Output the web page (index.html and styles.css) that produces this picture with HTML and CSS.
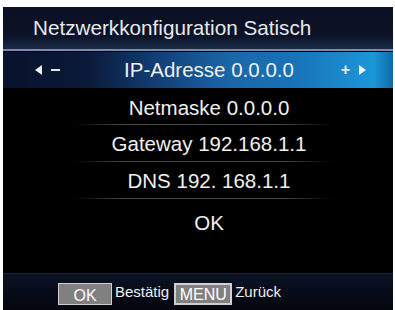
FILE: index.html
```html
<!DOCTYPE html>
<html lang="de">
<head>
    <meta charset="UTF-8">
    <title>Netzwerkkonfiguration</title>
    <link rel="stylesheet" href="styles.css">
</head>
<body>
    <div class="screen">
        <div class="header">Netzwerkkonfiguration Satisch</div>

        <div class="menu">
            <div class="row selected">
                <span class="arrows left"><span class="tri tri-left"></span><span class="minus"></span></span>
                <span class="label">IP-Adresse 0.0.0.0</span>
                <span class="arrows right"><span class="plus">+</span><span class="tri tri-right"></span></span>
            </div>
            <div class="row"><span class="label">Netmaske 0.0.0.0</span></div>
            <div class="row"><span class="label">Gateway 192.168.1.1</span></div>
            <div class="row"><span class="label">DNS 192. 168.1.1</span></div>
            <div class="row ok"><span class="label">OK</span></div>
        </div>

        <div class="footer">
            <span class="key key-ok">OK</span>
            <span class="hint">Bestätig</span>
            <span class="key key-menu">MENU</span>
            <span class="hint">Zurück</span>
        </div>
    </div>
</body>
</html>
```

FILE: styles.css
```css
body {
    margin: 0;
    background: #ffffff;
    font-family: "Liberation Sans", Arial, sans-serif;
}

.screen {
    margin: 7px 2px 0 3px;
    height: 303px;
    background: #000000;
    display: flex;
    flex-direction: column;
}

/* Title bar */
.header {
    height: 42px;
    padding-left: 30px;
    display: flex;
    align-items: center;
    color: #e6e8ec;
    font-size: 20.7px;
    background: linear-gradient(to bottom, #0b1022 0%, #0c1328 70%, #1a2b48 100%);
    border-bottom: 2px solid #7d8ca3;
}

/* Menu rows */
.menu {
    display: flex;
    flex-direction: column;
}

.row {
    height: 37px;
    padding-left: 22px;
    display: flex;
    align-items: center;
    justify-content: center;
    position: relative;
    color: #f0f0f0;
    font-size: 20.5px;
}

.row::after {
    content: "";
    position: absolute;
    left: 70px;
    right: 60px;
    bottom: 0;
    height: 1px;
    background: linear-gradient(to right, rgba(90, 90, 90, 0), #4a4a4a 20%, #4a4a4a 80%, rgba(90, 90, 90, 0));
}

.row.selected {
    height: 36px;
    margin-top: 1px;
    background: linear-gradient(to right, #08132c 0%, #0a1a3a 22%, #123f78 40%, #1a66a8 58%, #1873b8 75%, #1b97d8 95%, #106aa8 100%);
}

.row.selected::after,
.row.ok::after {
    display: none;
}

.row.ok {
    height: 42px;
    padding-top: 6px;
    box-sizing: border-box;
}

.row:nth-child(2) {
    padding-top: 3px;
    box-sizing: border-box;
}

.arrows {
    position: absolute;
    top: 0;
    bottom: 0;
    display: flex;
    align-items: center;
    gap: 9px;
}

.arrows.left {
    left: 32px;
}

.arrows.right {
    right: 27px;
}

.tri {
    width: 0;
    height: 0;
    border-top: 5px solid transparent;
    border-bottom: 5px solid transparent;
}

.tri-left {
    border-right: 7px solid #f2f2f2;
}

.tri-right {
    border-left: 7px solid #f2f2f2;
}

.minus {
    width: 9px;
    height: 2px;
    background: #e8e8e8;
}

.plus {
    font-size: 16px;
    font-weight: bold;
    color: #e8e8e8;
    line-height: 1;
}

/* Footer */
.footer {
    margin-top: auto;
    height: 37px;
    padding-left: 55px;
    padding-top: 9px;
    box-sizing: border-box;
    display: flex;
    align-items: flex-start;
    background: linear-gradient(to bottom, #0a1224, #04060e);
    border-top: 1px solid #1b2233;
}

.key {
    height: 22px;
    box-sizing: border-box;
    background: #808080;
    border: 1px solid #cfcfcf;
    color: #ffffff;
    font-size: 16px;
    display: flex;
    justify-content: center;
}

.key-ok {
    width: 54px;
    align-items: center;
    padding-top: 3px;
}

.key-menu {
    width: 58px;
    margin-left: 5px;
    align-items: flex-end;
    line-height: 1;
    border-width: 2px;
}

.hint {
    color: #f0f0f0;
    font-size: 15px;
    margin-left: 3px;
}
```
